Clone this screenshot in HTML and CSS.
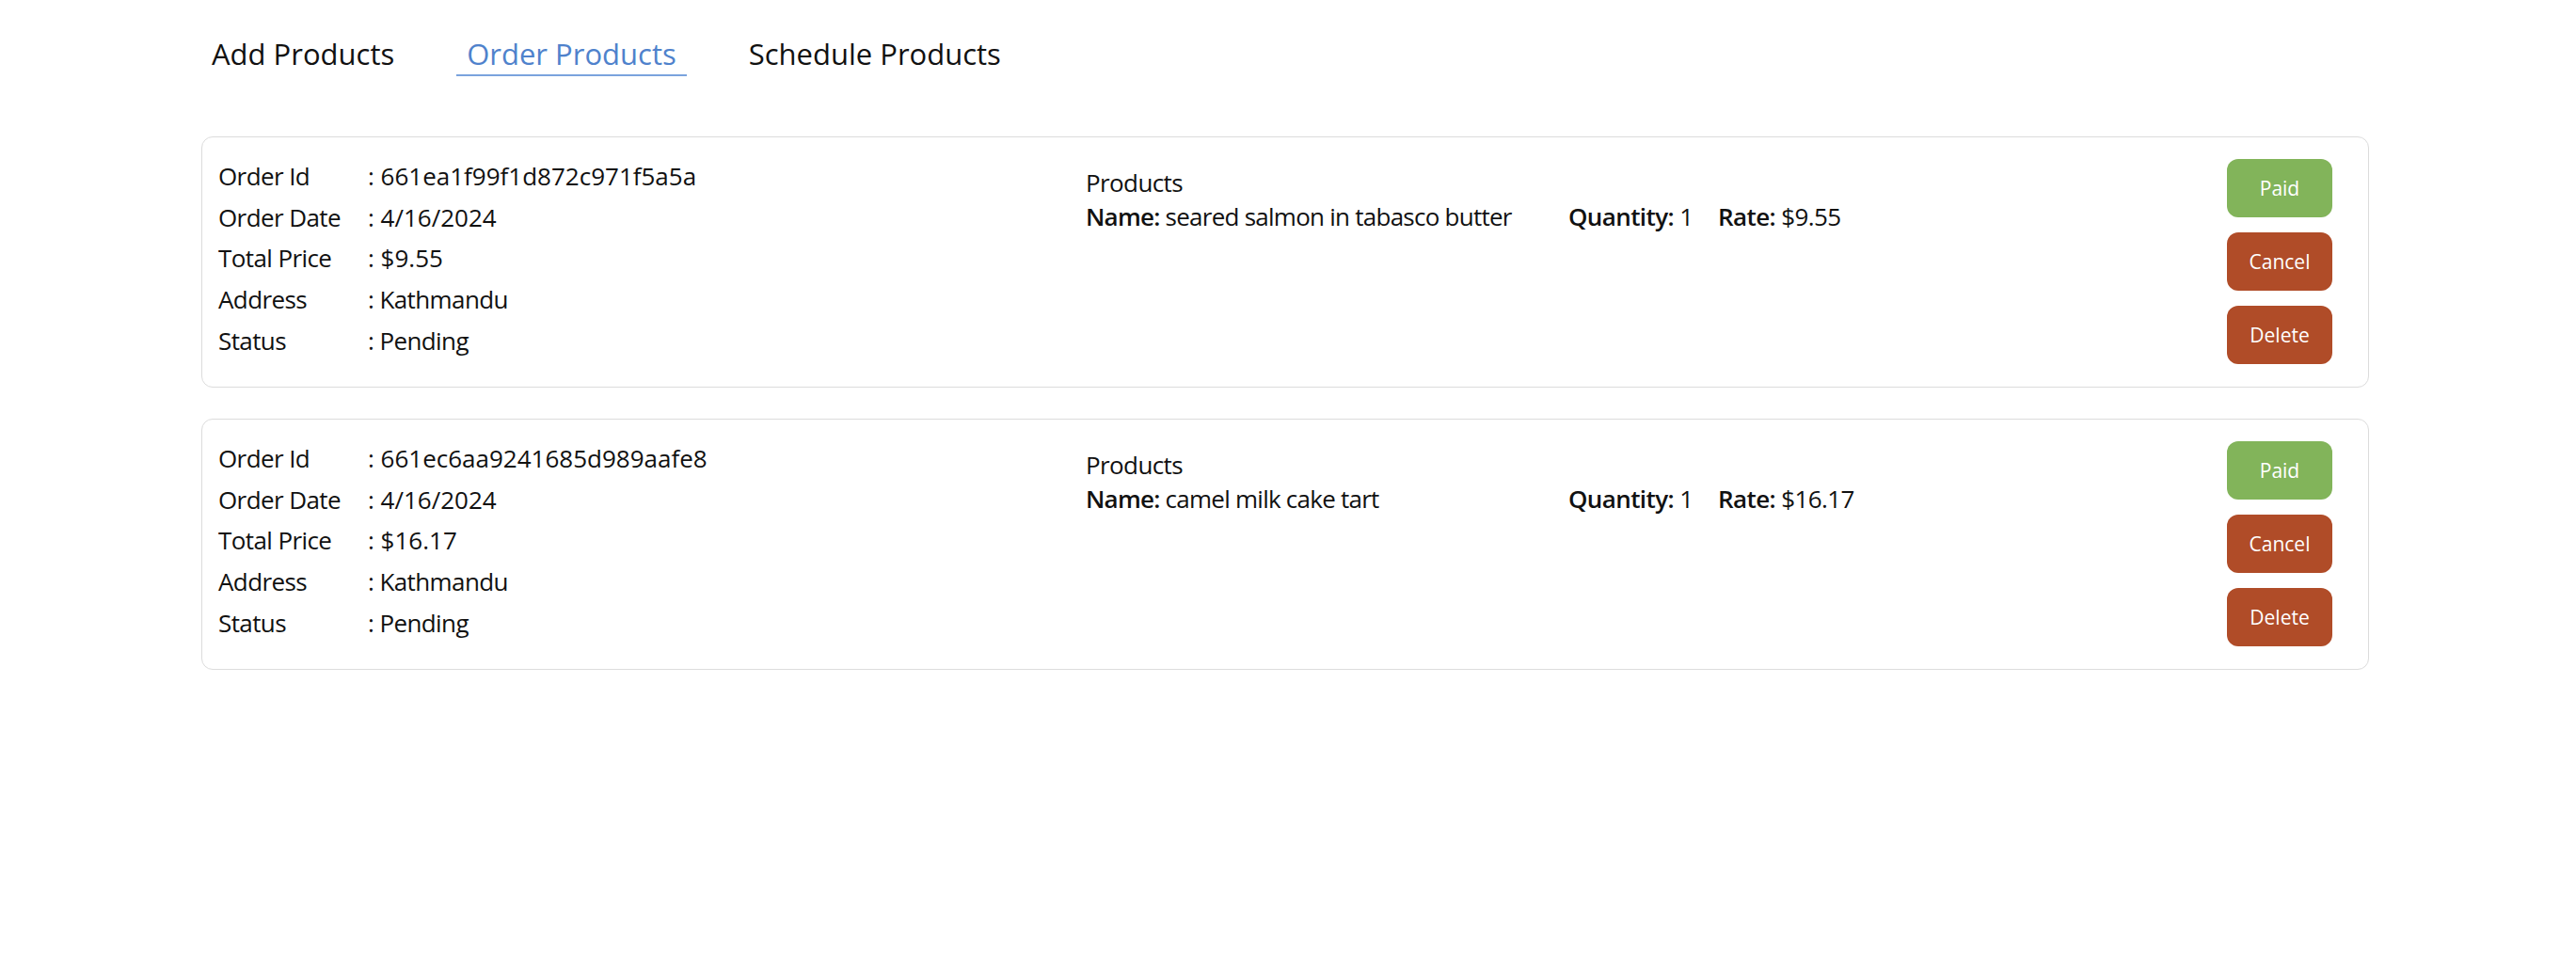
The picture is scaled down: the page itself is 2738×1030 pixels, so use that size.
FILE: index.html
```html
<!DOCTYPE html>
<html lang="en">
<head>
<meta charset="utf-8">
<title>Order Products</title>
<link rel="stylesheet" href="styles.css">
</head>
<body>
<div class="page">
  <nav class="tabs">
    <a class="tab">Add Products</a>
    <a class="tab active">Order Products</a>
    <a class="tab">Schedule Products</a>
  </nav>

  <section class="orders">
    <article class="card">
      <div class="info">
        <div class="row"><span class="label">Order Id</span><span class="value id">: 661ea1f99f1d872c971f5a5a</span></div>
        <div class="row"><span class="label">Order Date</span><span class="value id">: 4/16/2024</span></div>
        <div class="row"><span class="label">Total Price</span><span class="value id">: $9.55</span></div>
        <div class="row"><span class="label">Address</span><span class="value">: Kathmandu</span></div>
        <div class="row"><span class="label">Status</span><span class="value">: Pending</span></div>
      </div>
      <div class="products">
        <div class="products-title">Products</div>
        <div class="product">
          <span class="p-name"><b>Name:</b> seared salmon in tabasco butter</span>
          <span class="p-qty"><b>Quantity:</b> 1</span>
          <span class="p-rate"><b>Rate:</b> $9.55</span>
        </div>
      </div>
      <div class="actions">
        <button class="btn paid">Paid</button>
        <button class="btn danger">Cancel</button>
        <button class="btn danger">Delete</button>
      </div>
    </article>

    <article class="card">
      <div class="info">
        <div class="row"><span class="label">Order Id</span><span class="value id">: 661ec6aa9241685d989aafe8</span></div>
        <div class="row"><span class="label">Order Date</span><span class="value id">: 4/16/2024</span></div>
        <div class="row"><span class="label">Total Price</span><span class="value id">: $16.17</span></div>
        <div class="row"><span class="label">Address</span><span class="value">: Kathmandu</span></div>
        <div class="row"><span class="label">Status</span><span class="value">: Pending</span></div>
      </div>
      <div class="products">
        <div class="products-title">Products</div>
        <div class="product">
          <span class="p-name"><b>Name:</b> camel milk cake tart</span>
          <span class="p-qty"><b>Quantity:</b> 1</span>
          <span class="p-rate"><b>Rate:</b> $16.17</span>
        </div>
      </div>
      <div class="actions">
        <button class="btn paid">Paid</button>
        <button class="btn danger">Cancel</button>
        <button class="btn danger">Delete</button>
      </div>
    </article>
  </section>
</div>
</body>
</html>
```
FILE: styles.css
```css
* { box-sizing: border-box; }

html, body {
  margin: 0;
  padding: 0;
  background: #ffffff;
}

body {
  font-family: "Open Sans", "Noto Sans", sans-serif;
  color: #111111;
}

.page {
  width: 2304px;
  margin-left: 214px;
  padding-top: 38px;
}

.tabs {
  display: flex;
  gap: 55px;
  align-items: flex-end;
}

.tab {
  font-size: 31px;
  line-height: 38px;
  padding: 0 11px 3px;
  border-bottom: 2px solid transparent;
  color: #111111;
  cursor: pointer;
}

.tab.active {
  color: #4f82cc;
  border-bottom-color: #7aa3dd;
}

.orders {
  margin-top: 64px;
  display: flex;
  flex-direction: column;
  gap: 33px;
}

.card {
  display: flex;
  align-items: flex-start;
  border: 1px solid #dcdcdc;
  border-radius: 12px;
  padding: 18px 38px 18px 17px;
  height: 267px;
  font-size: 26px;
  letter-spacing: -0.6px;
}

.info {
  width: 922px;
  padding-top: 2px;
}

.row {
  display: flex;
  line-height: 43.65px;
}

.label {
  width: 159px;
}

.value.id {
  letter-spacing: 0;
}

.products {
  flex: 1;
  padding-top: 12px;
  line-height: 36px;
}

.product {
  display: grid;
  grid-template-columns: 513px 159px auto;
}

.p-name {
  letter-spacing: -0.75px;
}

.product b {
  font-weight: 600;
}

.actions {
  padding-top: 5px;
  display: flex;
  flex-direction: column;
  gap: 16px;
}

.btn {
  width: 112px;
  height: 62px;
  border: none;
  border-radius: 12px;
  color: #ffffff;
  font-family: "Open Sans", "Noto Sans", sans-serif;
  font-size: 21px;
  letter-spacing: 0;
  cursor: pointer;
}

.btn.paid { background: #82b45a; }
.btn.danger { background: #b04c28; }
```
